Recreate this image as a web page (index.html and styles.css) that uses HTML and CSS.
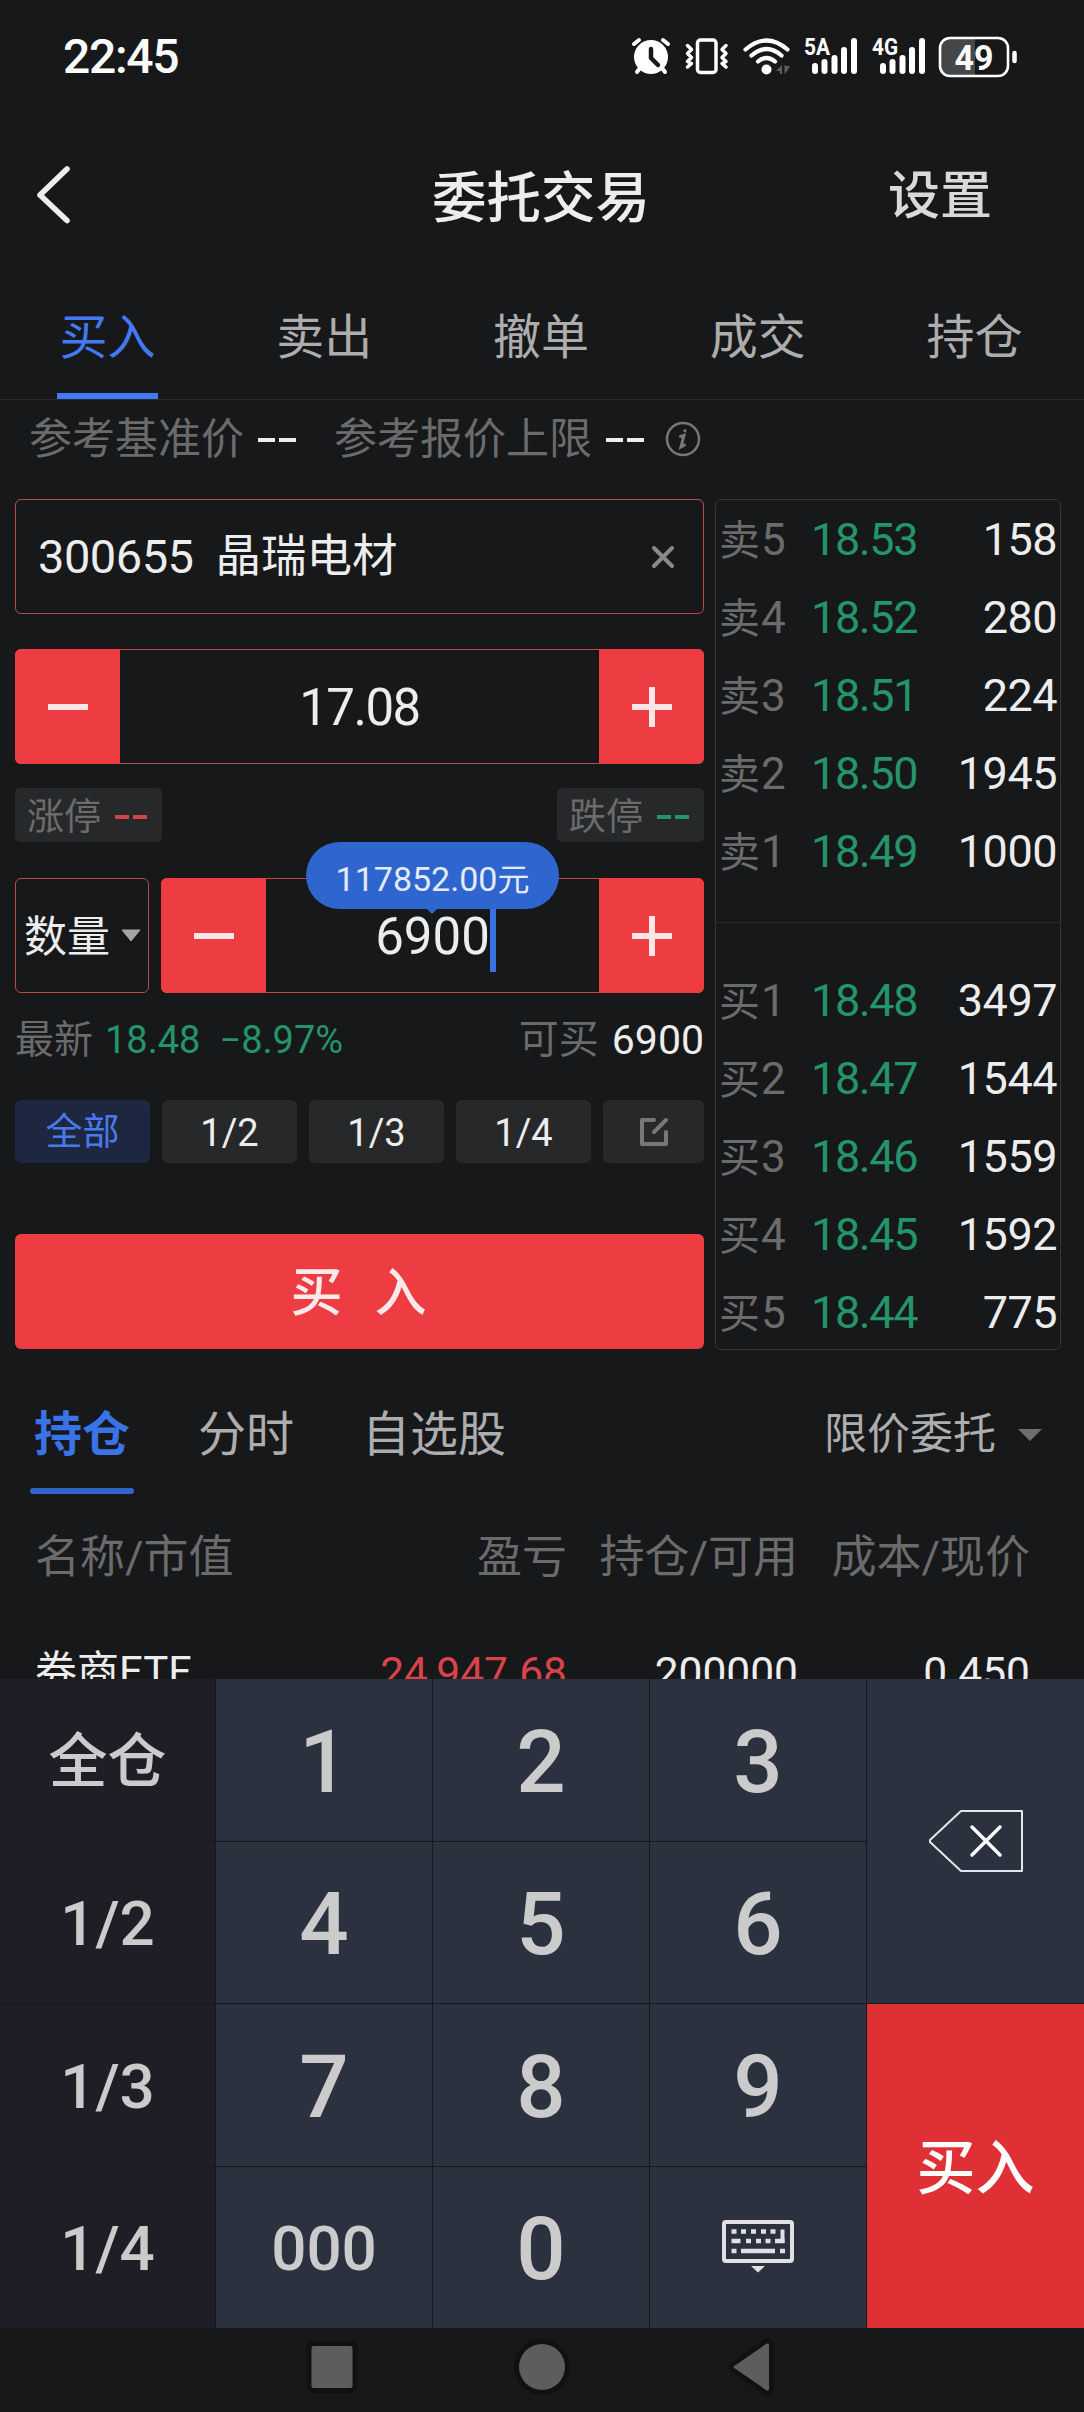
FILE: index.html
```html
<!DOCTYPE html>
<html lang="zh-CN">
<head>
	<meta charset="utf-8">
	<title>委托交易</title>
	<link rel="stylesheet" href="styles.css">
</head>
<body>
<div id="wrap">
	<!-- 状态栏 -->
	<div class="status">
		<span class="time">22:45</span>
		<svg class="status-icons" width="390" height="44" viewBox="630 34 390 44" fill="none" stroke-linecap="round" stroke-linejoin="round">
			<!-- 闹钟 -->
			<circle cx="651" cy="57" r="17" fill="#fff"/>
			<path d="M634 44l5-4M668 44l-5-4M640 68l-3 4M662 68l3 4" stroke="#fff" stroke-width="4"/>
			<path d="M651 49v9l7 7" stroke="#17181a" stroke-width="4.5"/>
			<!-- 振动 -->
			<rect x="697.5" y="40" width="18.5" height="32.500" rx="3" stroke="#fff" stroke-width="3.5"/>
			<path d="M687.500 45.500l4 4-4 4 4 4-4 4 4 2-4 3.500M726 45.500l-4 4 4 4-4 4 4 4-4 2 4 3.500" stroke="#fff" stroke-width="3.5"/>
			<!-- wifi -->
			<path d="M745.500 49.500q21-18 42 0M751.500 55.500q15-13 30 0M758 61.500q8.500-7 17 0" stroke="#fff" stroke-width="4.200"/>
			<circle cx="766.500" cy="69.500" r="5" fill="#fff"/>
			<path d="M776 71l6-6v9h-2v-3zM784.500 65v9l2.500-3 3-5h-3z" fill="#5d5e60"/>
			<!-- 信号 -->
			<path d="M815 66v5M824.500 62v9M834.500 58v13M844 50v21M854 41v30" stroke="#fff" stroke-width="6"/>
			<path d="M883 66v5M892.500 62v9M902.500 58v13M912 50v21M922 41v30" stroke="#fff" stroke-width="6"/>
			<text x="804" y="55" class="net" textLength="26" lengthAdjust="spacingAndGlyphs">5A</text>
			<text x="872" y="55" class="net" textLength="26" lengthAdjust="spacingAndGlyphs">4G</text>
			<!-- 电池 -->
			<path d="M949 39h26v36h-26a8 8 0 0 1-8-8V47a8 8 0 0 1 8-8z" fill="#464749"/>
			<rect x="940" y="38" width="68" height="38" rx="10" stroke="#fff" stroke-width="2.600"/>
			<path d="M1014.500 53v8" stroke="#fff" stroke-width="4.500"/>
			<text x="954.500" y="69.500" class="battery" textLength="39" lengthAdjust="spacingAndGlyphs">49</text>
		</svg>
	</div>

	<!-- 标题 -->
	<div class="header">
		<svg class="back" width="40" height="64" viewBox="34 163 40 64" fill="none" stroke="#ededed" stroke-width="5.600" stroke-linecap="round" stroke-linejoin="round"><path d="M67 169L40 195l27 25.500"/></svg>
		<h1>委托交易</h1>
		<span class="setting">设置</span>
	</div>

	<div class="tabs">
		<span class="on">买入</span>
		<span>卖出</span>
		<span>撤单</span>
		<span>成交</span>
		<span>持仓</span>
	</div>

	<div class="refer">
		<span>参考基准价</span><b class="dash"></b>
		<span class="second">参考报价上限</span><b class="dash"></b>
		<svg class="info" width="36" height="36" viewBox="0 0 36 36" fill="none" stroke="#777" stroke-width="2.500" stroke-linecap="round"><circle cx="18" cy="18" r="16"/><path d="M15.500 15.500l3.500-1-3 11.500 3.500-2M20 9.500v.500" stroke-width="3"/></svg>
	</div>

	<div class="trade">
		<div class="form">
			<div class="stock">
				<span>300655</span><span class="name">晶瑞电材</span>
				<svg width="24" height="24" viewBox="0 0 24 24" stroke="#8a8a8b" stroke-width="4" stroke-linecap="round"><path d="M3 3l18 18M21 3L3 21"/></svg>
			</div>

			<div class="stepper">
				<span class="btn"><svg width="40" height="40" viewBox="0 0 40 40"><path d="M0 20h40" stroke="#fbe4e5" stroke-width="6"/></svg></span>
				<span class="num price">17.08</span>
				<span class="btn"><svg width="40" height="40" viewBox="0 0 40 40"><path d="M0 20h40M20 0v40" stroke="#fbe4e5" stroke-width="6"/></svg></span>
			</div>

			<div class="limits">
				<span class="tag">涨停<b class="dash up"></b></span>
				<span class="tag">跌停<b class="dash down"></b></span>
			</div>

			<div class="amount">
				<div class="select"><span>数量</span><svg width="20" height="17" viewBox="0 0 20 17"><path d="M1 3h18L10 14z" fill="#a5a5a6" stroke="#a5a5a6" stroke-linejoin="round"/></svg></div>
				<div class="stepper">
					<span class="btn"><svg width="40" height="40" viewBox="0 0 40 40"><path d="M0 20h40" stroke="#fbe4e5" stroke-width="6"/></svg></span>
					<span class="num">6900<i class="cursor"></i></span>
					<span class="btn"><svg width="40" height="40" viewBox="0 0 40 40"><path d="M0 20h40M20 0v40" stroke="#fbe4e5" stroke-width="6"/></svg></span>
					<span class="tip">117852.00<em>元</em></span>
				</div>
			</div>

			<div class="latest">
				<span class="label">最新</span>
				<span class="green">18.48</span>
				<span class="green rate">−8.97%</span>
				<span class="label can">可买</span>
				<span class="can-num">6900</span>
			</div>

			<div class="chips">
				<span class="on">全部</span>
				<span>1/2</span>
				<span>1/3</span>
				<span>1/4</span>
				<span class="edit"><svg width="30" height="30" viewBox="0 0 30 30" fill="none" stroke="#777" stroke-width="4" stroke-linecap="round" stroke-linejoin="round"><path d="M15 3H3v24h24V15M15 15L27 3"/></svg></span>
			</div>

			<div class="submit">买<i></i>入</div>
		</div>

		<!-- 五档 -->
		<div class="book">
			<div class="side">
				<p><span>卖<em>5</em></span><b>18.53</b><strong>158</strong></p>
				<p><span>卖<em>4</em></span><b>18.52</b><strong>280</strong></p>
				<p><span>卖<em>3</em></span><b>18.51</b><strong>224</strong></p>
				<p><span>卖<em>2</em></span><b>18.50</b><strong>1945</strong></p>
				<p><span>卖<em>1</em></span><b>18.49</b><strong>1000</strong></p>
			</div>
			<div class="side buy">
				<p><span>买<em>1</em></span><b>18.48</b><strong>3497</strong></p>
				<p><span>买<em>2</em></span><b>18.47</b><strong>1544</strong></p>
				<p><span>买<em>3</em></span><b>18.46</b><strong>1559</strong></p>
				<p><span>买<em>4</em></span><b>18.45</b><strong>1592</strong></p>
				<p><span>买<em>5</em></span><b>18.44</b><strong>775</strong></p>
			</div>
		</div>
	</div>

	<!-- 持仓 -->
	<div class="subtabs">
		<span class="on">持仓</span>
		<span>分时</span>
		<span>自选股</span>
		<span class="type">限价委托<svg width="24" height="12" viewBox="0 0 24 12"><path d="M0 0h24L12 12z" fill="#6e6e6f"/></svg></span>
	</div>
	<div class="row thead">
		<span>名称/市值</span><span>盈亏</span><span>持仓/可用</span><span>成本/现价</span>
	</div>
	<div class="row hold">
		<span>券商ETF</span><span class="red">24,947.68</span><span>200000</span><span>0.450</span>
	</div>

	<!-- 键盘 -->
	<div class="keypad">
		<span class="frac zh">全仓</span><span>1</span><span>2</span><span>3</span>
		<span class="del"><svg width="96" height="64" viewBox="928 1809 96 64" fill="none" stroke="#e4e5e8" stroke-width="2" stroke-linejoin="round"><path d="M961 1811h61v60h-61l-31-29v-2z"/><path d="M972 1827l28 28M1000 1827l-28 28" stroke="#fff" stroke-width="3.500" stroke-linecap="round"/></svg></span>
		<span class="frac">1/2</span><span>4</span><span>5</span><span>6</span>
		<span class="frac">1/3</span><span>7</span><span>8</span><span>9</span>
		<span class="ok zh">买入</span>
		<span class="frac">1/4</span><span class="zeros">000</span><span>0</span>
		<span class="hide"><svg width="72" height="54" viewBox="0 0 72 54" fill="none" stroke="#e0e0e2"><rect x="2" y="2" width="68" height="39" rx="2" stroke-width="4"/><path d="M9.500 11.500h5m4.500 0h5m5 0h5m5 0h5m4.500 0h5M9.500 21h9m5.500 0h5m5 0h5m4.500 0h5m4.500 0h9.500M9.500 31h5m4.500 0h34m5 0h5" stroke-width="4.500"/><path d="M60.500 9.500V23" stroke-width="4"/><path d="M29 46h14l-7 6.500z" fill="#e0e0e2" stroke="none"/></svg></span>
	</div>

	<div class="nav">
		<svg width="1084" height="84" viewBox="0 2328 1084 84" fill="#5c5d5f" stroke="#101112" stroke-width="10" stroke-linejoin="round" paint-order="stroke"><rect x="311.500" y="2346" width="41" height="42" rx="2"/><circle cx="542" cy="2367" r="23"/><path d="M735 2365.500q-3 1.500 0 3l31 21.500q3 1.500 3-1.500v-43q0-3-3-1.500z"/></svg>
	</div>
</div>
</body>
</html>
```
FILE: styles.css
```css
*{margin:0; padding:0; box-sizing:border-box;}
body{background-color:#17181a; color:#ededed; font-family:Roboto, "Noto Sans CJK SC", sans-serif;}
#wrap{width:1084px; height:2412px; overflow:hidden; display:flex; flex-direction:column;}
svg{display:block; flex:none;}
em, i{font-style:normal;}

.status{height:111px; padding:0 64px 0 63px; display:flex; justify-content:space-between; align-items:center; color:#fff;}
.time{font-size:48px; font-weight:500; letter-spacing:-1.3px; line-height:60px; padding-top:2px;}
.net{font-size:24px; font-weight:700; fill:#fff;}
.battery{font-size:35px; font-weight:700; fill:#fff;}

.header{height:168px; display:grid; grid-template-columns:1fr 216px 1fr; align-items:center; padding:0 92px 0 34px;}
.header h1{font-size:54.500px; font-weight:500; line-height:60px; white-space:nowrap; margin-left:27px; padding-top:6px;}
.setting{font-size:52px; line-height:60px; text-align:right; color:#d9d9d9; font-weight:500; padding-top:3px;}

.tabs{height:121px; display:flex; border-bottom:1px solid #292a2c;}
.tabs span{flex:1; display:flex; justify-content:center; font-size:48px; line-height:117px; color:#adadae; padding-right:2px;}
.tabs .on{color:#4479f3; position:relative;}
.tabs .on::after{content:""; position:absolute; width:101px; height:6px; background-color:#4479f3; top:114px; left:57px;}

.refer{height:99px; padding:0 29px 22px; display:flex; align-items:center; font-size:43px; line-height:60px; color:#6b6b6c;}
.refer .second{margin-left:38px;}
.info{margin-left:21px;}
.dash{width:38px; height:4px; margin:2px 0 0 14px; color:#ededed; background:linear-gradient(90deg, currentColor 17px, transparent 17px, transparent 21px, currentColor 21px);}

.trade{height:851px; padding:0 23px 0 15px; display:flex; justify-content:space-between;}
.form{width:689px; display:flex; flex-direction:column;}
.stock{height:115px; border:1px solid #c0484b; border-radius:6px; padding:0 28px 0 22px; display:flex; align-items:center; font-size:47px; letter-spacing:-.5px;}
.stock .name{font-size:45.500px; line-height:60px; margin-left:22px; padding-top:1px; flex:1; letter-spacing:0;}
.stepper{height:115px; border:1px solid #c0484b; border-radius:6px; background-color:#17181a; display:flex; position:relative;}
.form > .stepper{margin-top:35px;}
.btn{width:105px; margin:-1px; background-color:#ed3d42; border-radius:6px 0 0 6px; display:flex; align-items:center; justify-content:center;}
.num + .btn{border-radius:0 6px 6px 0;}
.num{flex:1; display:flex; align-items:center; justify-content:center; font-size:51px; padding-top:2px;}
.price{letter-spacing:-1.5px;}

.limits{margin-top:24px; height:54px; display:flex; justify-content:space-between;}
.tag{width:147px; background-color:#27282a; border-radius:5px; display:flex; align-items:center; padding:5px 0 0 12px; font-size:37px; line-height:48px; color:#6b6b6c;}
.tag .dash{width:32px; margin:0 0 1px 14px; background:linear-gradient(90deg, currentColor 14px, transparent 14px, transparent 18px, currentColor 18px);}
.tag .up{color:#cf4548;}
.tag .down{color:#24946a;}

.amount{margin-top:36px; display:flex; gap:12px;}
.select{width:134px; height:115px; border:1px solid #c0484b; border-radius:6px; display:flex; align-items:center; gap:11px; padding-left:8px; font-size:43px; line-height:60px; white-space:nowrap;}
.select span{padding-top:2px;}
.amount .stepper{flex:1;}
.cursor{width:6px; height:63px; background-color:#3b70df; margin:8px -6px 0 0;}
/* 金额提示 */
.tip{position:absolute; left:144px; top:-37px; width:253px; height:67px; border-radius:34px; background-color:#2e65cf; color:#e3ebfb; font-size:34px; line-height:74px; text-align:center;}
.tip em{font-size:32px;}
.tip::after{content:""; position:absolute; left:120px; top:66px; border:6px solid transparent; border-top-color:#2e65cf; border-bottom:0;}

.latest{height:107px; padding-bottom:14px; display:flex; align-items:center; font-size:38px; line-height:60px;}
.label{color:#6b6b6c; font-size:39px;}
.green{color:#24946a; margin-left:12px;}
.rate{margin-left:19px;}
.can{margin-left:auto; font-size:40px;}
.can-num{font-size:41px; margin-left:13px;}

.chips{display:flex; gap:12px; height:63px; line-height:56px;}
.chips span{width:135px; border-radius:6px; background-color:#27282a; display:flex; align-items:center; justify-content:center; font-size:38px; padding-top:2px;}
.chips .on{background-color:#1d2740; color:#477bed; font-size:37px; padding:3px 0 0;}
.chips .edit{width:101px; padding:0;}
.submit{margin-top:71px; height:115px; border-radius:6px; background-color:#ed3d42; color:#fbe9e9; display:flex; align-items:center; justify-content:center; font-size:52px; line-height:60px; font-weight:500; padding:5px 2px 0 0;}
.submit i{width:32px;}

.book{width:346px; border:1px solid #333436; border-radius:6px;}
.side{height:422px; padding-top:1px;}
.buy{border-top:1px solid #292a2c; padding-top:39px; height:426px;}
.book p{height:78px; display:flex; align-items:center; padding:0 3px 0 3px; font-size:45px; line-height:60px;}
.book span{width:92px; font-size:41px; color:#6b6b6c; white-space:nowrap;}
.book em{font-size:44px; margin-left:1px;}
.book b{font-weight:400; color:#24946a; letter-spacing:-1.4px;}
.book strong{font-weight:400; margin-left:auto; letter-spacing:-.5px;}

.subtabs{height:145px; padding:0 42px 0 34px; display:flex; gap:68px; font-size:48px; line-height:169px; color:#adadae;}
.subtabs .on{color:#3a73e6; font-weight:700; position:relative;}
.subtabs .on::after{content:""; position:absolute; left:-4px; top:138px; width:104px; height:6px; border-radius:3px; background-color:#3263c6;}
.subtabs .type{margin-left:auto; height:169px; font-size:43px; display:flex; align-items:center; gap:22px;}

.row{display:grid; grid-template-columns:1fr 240px 231px 232px; padding:0 54px 0 35px; font-size:45px; text-align:right; white-space:nowrap;}
.row span:first-child{text-align:left;}
.thead{height:124px; line-height:125px; color:#6b6b6c;}
.hold{height:60px; line-height:107px; font-size:42.500px;}
.hold span:first-child{font-size:42px; line-height:105px;}
.red{color:#d9434a;}

.keypad{height:649px; display:grid; grid-template-columns:215px 216px 216px 216px 217px; grid-template-rows:repeat(4, 1fr); gap:1px; position:relative; background-color:#17181a;}
.keypad span{background-color:#2c313f; color:#cbcbcb; font-size:87px; font-weight:500; line-height:100px; display:flex; align-items:center; justify-content:center; padding-top:4px;}
.keypad .frac{background-color:#1e1e26; font-size:62px;}
.keypad .zeros{font-size:62px;}
.keypad .zh{font-size:59px; padding-top:5px;}
.keypad .del{grid-row:span 2; padding:0;}
.keypad .ok{grid-row:span 2; background-color:#df3036; color:#fff;}
.keypad .hide{padding:0;}
.nav{height:84px;}
```
